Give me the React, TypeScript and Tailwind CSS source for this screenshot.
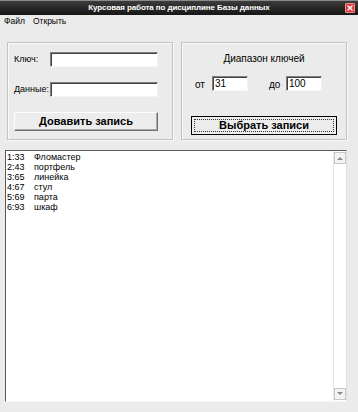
// Курсовая работа — главное окно (Win-style form)
const FONT = "font-['Liberation_Sans',Arial,sans-serif]";

const ROWS = [
  { key: "1:33", data: "Фломастер" },
  { key: "2:43", data: "портфель" },
  { key: "3:65", data: "линейка" },
  { key: "4:67", data: "стул" },
  { key: "5:69", data: "парта" },
  { key: "6:93", data: "шкаф" },
];

function Field({ value, className }: { value?: string; className: string }) {
  return (
    <div
      className={`h-[15px] bg-white border border-t-[#808080] border-l-[#808080] border-b-[#f4f4f4] border-r-[#f4f4f4] shadow-[inset_1px_1px_0_#404040] pl-[2px] text-[10px] leading-[13px] text-black ${className}`}
    >
      {value}
    </div>
  );
}

function ScrollArrow({ up }: { up?: boolean }) {
  return (
    <div className="flex h-[12px] w-[12px] items-center justify-center border border-[#c9c9c9] bg-[#f3f3f3]">
      <svg width="6" height="4" viewBox="0 0 6 4">
        <path d={up ? "M0 4 L3 1 L6 4 Z" : "M0 0 L3 3 L6 0 Z"} fill="#8a8a8a" />
      </svg>
    </div>
  );
}

export default function App() {
  return (
    <div className={`flex h-[412px] w-[358px] flex-col bg-[#ebebeb] text-black ${FONT}`}>
      {/* title bar */}
      <div className="relative flex h-[15px] items-center justify-center border-t border-[#8a8a8a] bg-gradient-to-b from-[#3c3c3c] to-[#161616]">
        <span className="text-[8px] font-bold leading-none tracking-[-0.1px] text-white">
          Курсовая работа по дисциплине Базы данных
        </span>
        <div className="absolute right-[3px] top-[2px] flex h-[10px] w-[10px] items-center justify-center rounded-[1px] bg-[#d8383a] border border-[#f08a8a]">
          <svg width="6" height="6" viewBox="0 0 6 6">
            <path d="M0.5 0.5 L5.5 5.5 M5.5 0.5 L0.5 5.5" stroke="#fff" strokeWidth="1.4" />
          </svg>
        </div>
      </div>

      {/* menu */}
      <div className="flex h-[13px] items-center gap-[8px] bg-[#ebebeb] pl-[4px] text-[8.5px]">
        <span>Файл</span>
        <span>Открыть</span>
      </div>

      {/* group boxes */}
      <div className="mt-[14px] flex gap-[8px] pl-[7px]">
        <div className="flex h-[98px] w-[166px] flex-col border border-[#c3c3c3] shadow-[inset_1px_1px_0_#fafafa,1px_1px_0_#fafafa] px-[6px] pt-[9px]">
          <div className="flex h-[15px] items-center">
            <span className="w-[36px] text-[9px]">Ключ:</span>
            <Field className="w-[108px]" />
          </div>
          <div className="mt-[15px] flex h-[15px] items-center">
            <span className="w-[36px] text-[9px]">Данные:</span>
            <Field className="w-[108px]" />
          </div>
          <button className="mt-[15px] h-[19px] w-[144px] border border-t-[#fdfdfd] border-l-[#fdfdfd] border-b-[#6e6e6e] border-r-[#6e6e6e] bg-[#ececec] text-[11px] font-bold leading-none shadow-[inset_-1px_-1px_0_#a9a9a9]">
            Довавить запись
          </button>
        </div>

        <div className="flex h-[98px] w-[166px] flex-col items-center border border-[#c3c3c3] shadow-[inset_1px_1px_0_#fafafa,1px_1px_0_#fafafa] pt-[10px]">
          <span className="h-[12px] text-[10px] leading-[12px]">Диапазон ключей</span>
          <div className="mt-[9px] flex w-full items-center pl-[13px]">
            <span className="mt-[3px] w-[17px] text-[10px]">от</span>
            <Field value="31" className="w-[36px]" />
            <span className="ml-[21px] mt-[3px] w-[17px] text-[10px]">до</span>
            <Field value="100" className="w-[36px]" />
          </div>
          <button className="mt-[24px] flex h-[19px] w-[146px] items-center justify-center border border-black bg-[#ececec] p-[2px] text-[11px] font-bold leading-none">
            <span className="flex h-full w-full items-center justify-center border border-dotted border-[#333]">
              Выбрать записи
            </span>
          </button>
        </div>
      </div>

      {/* list */}
      <div className="ml-[5px] mt-[10px] flex h-[252px] w-[342px] border border-l-[#5a5a5a] border-t-[#5a5a5a] border-r-[#e0e0e0] border-b-[#f7f7f7] bg-white">
        <div className="flex-1 pl-[1px] pt-[1px] text-[9px] leading-[10px]">
          {ROWS.map((r) => (
            <div key={r.key} className="flex">
              <span className="w-[27px]">{r.key}</span>
              <span>{r.data}</span>
            </div>
          ))}
        </div>
        <div className="flex w-[13px] flex-col justify-between border-l border-[#e2e2e2] pt-[1px] pb-[1px]">
          <ScrollArrow up />
          <ScrollArrow />
        </div>
      </div>
    </div>
  );
}
